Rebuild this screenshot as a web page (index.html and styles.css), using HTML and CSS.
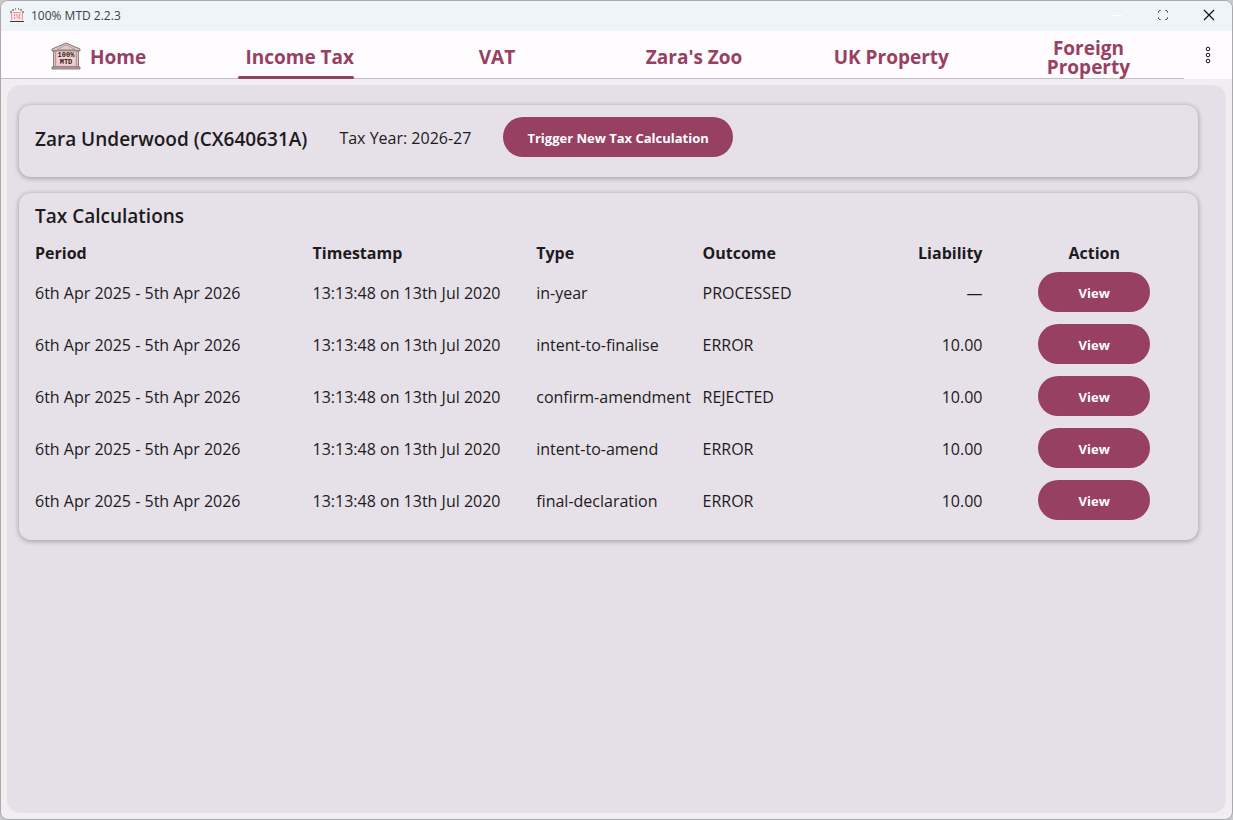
FILE: index.html
```html
<!DOCTYPE html>
<html lang="en">
<head>
<meta charset="utf-8">
<title>100% MTD 2.2.3</title>
<link rel="stylesheet" href="styles.css">
</head>
<body>
<div class="window">
  <header class="titlebar">
    <svg class="app-icon" viewBox="0 0 16 14" aria-hidden="true">
      <path d="M2 4h12v9H2z" fill="#f8e4e6"/>
      <path d="M1 4h2M13 4h2M3 2h2M11 2h2M6 1h1M9 1h1M1 13.500h14" stroke="#4b3438" fill="none"/>
      <path d="M2.500 5v7M13.500 5v7M4 4.500h8" stroke="#e99aa4" fill="none"/>
      <path d="M5.500 6v2M8 6v2M10.500 6v2M5.500 9v2M7.500 9h3v2" stroke="#d98b96" fill="none"/>
    </svg>
    <span class="app-title">100% MTD 2.2.3</span>
    <div class="window-controls">
      <button class="control" aria-label="Minimise"><svg viewBox="0 0 12 12"><path d="M1 6.500h10" stroke="#fff"/></svg></button>
      <button class="control" aria-label="Maximise"><svg viewBox="0 0 12 12"><path d="M1.500 3.500v-1l1-1h1M8.500 1.500h1l1 1v1M10.500 8.500v1l-1 1h-1M3.500 10.500h-1l-1-1v-1" fill="none" stroke="#111"/></svg></button>
      <button class="control" aria-label="Close"><svg viewBox="0 0 12 12"><path d="m1 1 10 10M11 1 1 11" fill="none" stroke="#111" stroke-width="1.200"/></svg></button>
    </div>
  </header>
  <nav class="nav">
    <div class="tabs">
      <a class="tab tab-home" href="#home">
        <svg class="logo" viewBox="0 0 30 28" aria-hidden="true">
          <path d="M15 1 29 7v2H1V7z" fill="#d5c3bf" stroke="#6b6060" stroke-width=".8"/>
          <path d="M6 7.500 15 3l9 4.500z" fill="#e0c8c4" stroke="#9d8b89" stroke-width=".6"/>
          <path d="M2.500 9h25v16h-25z" fill="#e6bfc0" stroke="#75686a" stroke-width=".8"/>
          <path d="M4.500 9v16M25.500 9v16" stroke="#b5999a"/>
          <path d="M6 9.500h18v14H6z" fill="#f2d0d0"/>
          <path d="M1 25h28v2H1z" fill="#cbb0af" stroke="#6b6060" stroke-width=".8"/>
          <text class="logo-text" x="15" y="15">100%</text>
          <text class="logo-text" x="15" y="22">MTD</text>
        </svg>
        Home
      </a>
      <a class="tab tab-active" href="#income-tax" aria-current="page">Income Tax</a>
      <a class="tab" href="#vat">VAT</a>
      <a class="tab" href="#zoo">Zara's Zoo</a>
      <a class="tab" href="#uk-property">UK Property</a>
      <a class="tab" href="#foreign-property">Foreign Property</a>
    </div>
    <button class="menu" aria-label="More options"><svg viewBox="0 0 6 18"><g fill="#fff" stroke="#111"><circle cx="3" cy="3" r="1.800"/><circle cx="3" cy="9" r="1.800"/><circle cx="3" cy="15" r="1.800"/></g></svg></button>
  </nav>
  <main class="content">
    <section class="card summary">
      <h1 class="heading">Zara Underwood (CX640631A)</h1>
      <span class="tax-year">Tax Year: 2026-27</span>
      <button class="button">Trigger New Tax Calculation</button>
    </section>
    <section class="card calculations">
      <h2 class="heading">Tax Calculations</h2>
      <table class="table">
        <colgroup><col class="col-period"><col class="col-time"><col class="col-type"><col class="col-outcome"><col class="col-liability"><col class="col-action"></colgroup>
        <thead>
          <tr><th>Period</th><th>Timestamp</th><th>Type</th><th>Outcome</th><th class="number">Liability</th><th class="action">Action</th></tr>
        </thead>
        <tbody>
          <tr><td>6th Apr 2025 - 5th Apr 2026</td><td>13:13:48 on 13th Jul 2020</td><td>in-year</td><td>PROCESSED</td><td class="number">—</td><td class="action"><button class="button button-view">View</button></td></tr>
          <tr><td>6th Apr 2025 - 5th Apr 2026</td><td>13:13:48 on 13th Jul 2020</td><td>intent-to-finalise</td><td>ERROR</td><td class="number">10.00</td><td class="action"><button class="button button-view">View</button></td></tr>
          <tr><td>6th Apr 2025 - 5th Apr 2026</td><td>13:13:48 on 13th Jul 2020</td><td>confirm-amendment</td><td>REJECTED</td><td class="number">10.00</td><td class="action"><button class="button button-view">View</button></td></tr>
          <tr><td>6th Apr 2025 - 5th Apr 2026</td><td>13:13:48 on 13th Jul 2020</td><td>intent-to-amend</td><td>ERROR</td><td class="number">10.00</td><td class="action"><button class="button button-view">View</button></td></tr>
          <tr><td>6th Apr 2025 - 5th Apr 2026</td><td>13:13:48 on 13th Jul 2020</td><td>final-declaration</td><td>ERROR</td><td class="number">10.00</td><td class="action"><button class="button button-view">View</button></td></tr>
        </tbody>
      </table>
    </section>
  </main>
</div>
</body>
</html>
```

FILE: styles.css
```css
* { box-sizing: border-box; }

body {
  margin: 0;
  background: #c9c9cc;
  color: #1d1a20;
  font-family: "Open Sans", "Noto Sans", sans-serif;
  font-size: 16px;
}

button { border: 0; font-family: inherit; cursor: pointer; }

.window {
  display: flex;
  flex-direction: column;
  min-height: 100vh;
  border: 1px solid #a9a9ae;
  border-radius: 8px;
  background: #f0eef0;
  overflow: hidden;
}

.titlebar {
  display: flex;
  align-items: center;
  height: 30px;
  padding: 0 0 2px 8px;
  background: #eff4f9;
}

.app-icon { width: 16px; height: 14px; }

.app-title {
  margin-left: 6px;
  color: #3c4046;
  font-size: 12px;
}

.window-controls { display: flex; margin-left: auto; }

.control {
  display: grid;
  place-items: center;
  width: 46px;
  height: 28px;
  padding: 0;
  background: transparent;
}

.control svg { width: 12px; height: 12px; }

.nav {
  display: flex;
  height: 48px;
  background: #fefcff;
}

.tabs {
  display: grid;
  grid-template-columns: repeat(6, 1fr);
  flex: 1;
  border-bottom: 1px solid #c3bfc5;
}

.tab {
  position: relative;
  display: flex;
  align-items: center;
  justify-content: center;
  padding: 6px 24px 0 30px;
  color: #984061;
  font-size: 19px;
  font-weight: 700;
  line-height: 19px;
  text-align: center;
  text-decoration: none;
}

.tab-home { gap: 9px; padding: 6px 28px 0 26px; }

.tab-active::after {
  content: "";
  position: absolute;
  right: 21%;
  bottom: -1px;
  left: 20%;
  height: 3px;
  border-radius: 2px;
  background: #8e4060;
}

.logo { width: 30px; height: 28px; margin-bottom: 4px; }

.logo-text {
  fill: #2c1c20;
  font-family: "Liberation Mono", monospace;
  font-size: 7px;
  font-weight: 700;
  text-anchor: middle;
}

.menu {
  display: grid;
  place-items: center;
  width: 48px;
  padding: 0;
  background: transparent;
}

.menu svg { width: 6px; height: 18px; }

.content {
  display: flex;
  flex: 1;
  flex-direction: column;
  gap: 16px;
  margin: 6px;
  padding: 20px 28px 20px 12px;
  border-radius: 14px;
  background: #e5e0e7;
}

.card {
  padding: 12px 16px;
  border-radius: 12px;
  background: #e6e1e8;
  box-shadow: 0 1px 4px 1px rgba(60, 50, 65, 0.32);
}

.summary {
  display: flex;
  align-items: flex-start;
  gap: 32px;
  min-height: 72px;
}

.heading {
  margin: 0;
  font-size: 19px;
  font-weight: 600;
  line-height: 28px;
}

.summary .heading { padding-top: 8px; }

.tax-year { padding-top: 7px; line-height: 28px; }

.calculations { padding-top: 9px; padding-bottom: 14px; }

.button {
  height: 40px;
  padding: 2px 24px 0;
  border-radius: 20px;
  background: #984061;
  color: #fff;
  font-size: 13px;
  font-weight: 700;
}

.button-view { width: 112px; }

.table {
  width: 100%;
  margin-top: 10px;
  border-collapse: collapse;
  table-layout: fixed;
  white-space: nowrap;
}

.col-period { width: 24.2%; }
.col-time { width: 19.5%; }
.col-type { width: 14.5%; }
.col-outcome { width: 14.5%; }
.col-liability { width: 12%; }
.col-action { width: 15.3%; }

.table th {
  height: 26px;
  padding: 0;
  font-weight: 700;
  text-align: left;
}

.table td { height: 52px; padding: 2px 0 0; }

.table .number { padding-right: 24px; text-align: right; }

.table .action { padding: 0; text-align: center; }

.action .button { vertical-align: middle; }
```
